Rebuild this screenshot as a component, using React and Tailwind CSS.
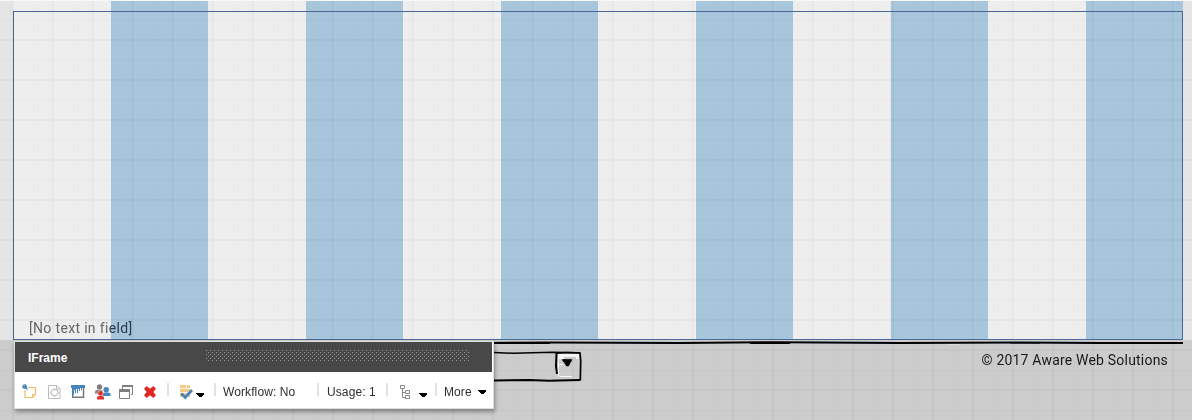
import React from "react";

function Caret({ className = "" }) {
  return (
    <svg width="8" height="5" viewBox="0 0 8 5" className={className} shapeRendering="crispEdges">
      <path d="M0 0h8v1L5 4H3L0 1z" fill="#000" />
    </svg>
  );
}

function Separator({ className = "" }) {
  return <span className={"block h-[13px] w-[2px] shrink-0 bg-[#e2e2e6] " + className} />;
}

function NoteIcon() {
  return (
    <svg width="16" height="16" viewBox="0 0 16 16" fill="none">
      <path d="M5.500 3.500h8v7l-3 3h-7.500V6" stroke="#efbb66" strokeWidth="1.200" />
      <path d="M13.500 10.500h-3v3" stroke="#efbb66" />
      <circle cx="2.600" cy="2.600" r="2.400" fill="#4684bd" />
      <path d="M3 3l2.500 2.500" stroke="#4684bd" strokeWidth="1.300" />
      <path d="M1.500 1.500h1" stroke="#bcd5ec" />
    </svg>
  );
}

function FileCodeIcon() {
  return (
    <svg width="14" height="16" viewBox="0 0 14 16" fill="none" stroke="#bcbcbc">
      <path d="M.500 1.500H9l3 3v10H.500z" />
      <path d="M8.500 1.500v3.500H12" />
      <path d="M4.500 6L2.500 8.500l2 2.500M8.500 6l2 2.500-2 2.500M4.500 6l2-1 2 1M4.500 11l2 1 2-1" strokeWidth="1.200" />
    </svg>
  );
}

function PaintIcon() {
  return (
    <svg width="14" height="15" viewBox="0 0 14 15">
      <path d="M1.700 4v9.300h10.800V4" fill="none" stroke="#777" strokeWidth="1.500" />
      <path d="M0 1h14v3h-3v2h-1V4H9v3H8V5H7v4H6V5H5v4H4V6H3v5H1V4H0z" fill="#4684bd" />
    </svg>
  );
}

function PeopleIcon() {
  return (
    <svg width="16" height="16" viewBox="0 0 16 16">
      <circle cx="4.500" cy="3" r="2.700" fill="#808080" />
      <path d="M0 9.500V8q0-2 2-2h4q1 0 2 1v2.500z" fill="#808080" />
      <circle cx="11.200" cy="5.700" r="2.700" fill="#4684bd" />
      <path d="M7.500 12v-1.500q0-2 2-2H13q2.500 0 2.500 2V12z" fill="#4684bd" />
      <circle cx="5.500" cy="9.200" r="2.700" fill="#e3302b" stroke="#fff" strokeWidth=".5" />
      <path d="M2 15.500V14q0-2 2-2h3q2 0 2 2v1.500z" fill="#e3302b" />
    </svg>
  );
}

function WindowsIcon() {
  return (
    <svg width="14" height="14" viewBox="0 0 14 14" fill="none" stroke="#808080">
      <path d="M3.500 4V1M13.500 1v8.500H12" />
      <path d="M3 1h11" strokeWidth="2" />
      <path d="M.500 5.500h10v8H.500z" fill="#fff" />
      <path d="M0 5.500h11" strokeWidth="3" />
    </svg>
  );
}

function DeleteIcon() {
  return (
    <svg width="12" height="12" viewBox="0 0 12 12">
      <path d="M2.800 0L6 2.800 9.200 0 12 2.800 9.300 6l2.700 3.200L9.200 12 6 9.300l-3.200 2.700L0 9.200 2.700 6 0 2.800z" fill="#dd2923" />
    </svg>
  );
}

function ValidateIcon() {
  return (
    <svg width="13" height="16" viewBox="0 0 13 16" fill="none">
      <path d="M0 1h10v12H0z" fill="#f3ca86" />
      <path d="M0 4.500h10M0 8.500h10M6.500 1v4" stroke="#fff8e8" />
      <path d="M1.200 9.500l4 4L12 6" stroke="#4684bd" strokeWidth="2.700" />
    </svg>
  );
}

function TreeIcon() {
  return (
    <svg width="11" height="14" viewBox="0 0 11 14" fill="none" stroke="#888">
      <path d="M.500.500h4v3h-4zM5.500 5.500h4v3h-4zM5.500 10.500h4v3h-4zM2.500 4v8.500h3M2.500 7.500h3" />
    </svg>
  );
}

/* Squared-paper lines: 40px cells with a fainter half-cell rule. */
function PaperLines({ id, y, dashed }) {
  return (
    <svg className="pointer-events-none absolute inset-0 h-full w-full" aria-hidden="true">
      <defs>
        <pattern id={id} width="40" height="40" x="12" y={y} patternUnits="userSpaceOnUse">
          <path d="M0 0h2v40H0zM0 0h40v2H0z" fill="#000" fillOpacity=".03" />
          <path d="M0 21h40v1H0z" fill="#000" fillOpacity=".022" />
          {dashed ? (
            <path d="M21 5h1v9h-1zM25 5h1v9h-1zM21 25h1v9h-1zM25 25h1v9h-1zM38 0h1v40h-1z" fill="#000" fillOpacity=".02" />
          ) : (
            <path d="M21 0h1v40h-1zM25 0h1v40h-1z" fill="#000" fillOpacity=".02" />
          )}
        </pattern>
      </defs>
      <rect width="100%" height="100%" fill={"url(#" + id + ")"} />
    </svg>
  );
}

function ContentArea() {
  return (
    <section className="relative h-[340px] bg-[#e5e5e5] pl-[13px] pr-[9px]">
      <div className="relative flex h-full flex-col justify-end bg-[#eee]">
        <p className="pb-[3px] pl-[16px] font-['Roboto',sans-serif] text-[14px] leading-[18px] tracking-[0.33px] text-[#666]">
          [No text in fi<span className="text-[#3b4650]">eld]</span>
        </p>
        <div className="absolute inset-x-0 bottom-0 top-px grid grid-cols-12 mix-blend-multiply">
          {Array.from({ length: 12 }, (_, i) => (
            <span key={i} className="even:bg-[#b3d4ec]" />
          ))}
        </div>
        <div className="absolute inset-x-0 bottom-0 top-[11px] border border-[#4a6996]" />
      </div>
      <PaperLines id="upper" y="39" dashed />
      <div className="absolute inset-x-0 top-0 h-px bg-[#f8f8f8]" />
    </section>
  );
}

function SketchLines() {
  return (
    <svg className="absolute left-[480px] top-0 h-[50px] w-[703px]" viewBox="0 0 703 50" fill="none" stroke="#000">
      <path d="M0 3L70 2.500 200 3 300 2.200 420 3 540 2.500 620 3 703 3" strokeWidth="2" />
      <path d="M10 3.500h60M120 2.500h80M270 3.500h40M530 3h30" strokeWidth="1" />
      <path d="M468 4.500h12" stroke="#ddd" />
      <path d="M14 12.500l20 .8 18-.5 20-.5 28 .5" strokeWidth="1.500" />
      <path d="M14 40.500l35-.5 20 .7 31-.7" strokeWidth="2" />
      <path d="M78 14h21v5h-3v-2H84v2h-5v18h-1zM79 24h4v1h-4zM80 36h12v1H80z" fill="#f6f6f6" stroke="none" />
      <path d="M76.500 13l-.500 13 1 8" strokeWidth="2" />
      <path d="M76 13.200l12-.7 12 .5.700 8-.4 19.500" strokeWidth="1.700" />
      <path d="M82.500 19.500h9q.5 1.500-1 2.500l-2 4h-2l-2-3.500q-2-1-2-3z" fill="#000" strokeWidth=".7" />
    </svg>
  );
}

function Footer() {
  return (
    <footer className="relative flex h-[80px] items-start justify-end bg-[#ccc] pr-[24px] pt-[10px]">
      <PaperLines id="lower" y="9" />
      <SketchLines />
      <p className="relative whitespace-nowrap font-['Roboto',sans-serif] text-[14px] leading-[20px] tracking-[0.2px] text-[#181818]">
        © 2017 Aware Web Solutions
      </p>
    </footer>
  );
}

function FieldToolbar() {
  return (
    <div className="absolute left-[14px] top-[341px] h-[68px] w-[480px] border border-[#dedede] bg-white font-['Liberation_Sans',Arial,sans-serif] text-[12px] text-[#2e2e2e] shadow-[1px_3px_4px_rgba(0,0,0,0.35)]">
      <div className="mr-px flex h-[30px] items-center bg-[#484848] pl-[13px] pr-[23px]">
        <b className="w-[178px] pt-px text-white">IFrame</b>
        <svg className="mb-[3px] h-[12px] w-[264px]" shapeRendering="crispEdges">
          <defs>
            <pattern id="grip" width="4" height="4" patternUnits="userSpaceOnUse">
              <path d="M0 0h1v1H0zM2 2h1v1H2z" fill="#999" />
            </pattern>
          </defs>
          <rect width="264" height="12" fill="url(#grip)" />
        </svg>
      </div>
      <div className="flex h-[35px] items-center pl-[7px] pt-[4px]">
        <div className="flex w-[26px]"><NoteIcon /></div>
        <div className="flex w-[23px]"><FileCodeIcon /></div>
        <div className="flex w-[24px]"><PaintIcon /></div>
        <div className="flex w-[24px]"><PeopleIcon /></div>
        <div className="flex w-[25px]"><WindowsIcon /></div>
        <div className="flex w-[23px]"><DeleteIcon /></div>
        <Separator className="mb-[4px]" />
        <div className="ml-[11px] flex w-[34px] items-center">
          <ValidateIcon />
          <Caret className="ml-[3px] mt-[7px]" />
        </div>
        <div className="flex w-[9px]"><Separator className="mb-[4px]" /></div>
        <span className="w-[94px] whitespace-nowrap tracking-[0.1px]">Workflow: No</span>
        <div className="flex w-[10px]"><Separator className="mb-[4px]" /></div>
        <span className="w-[59px] whitespace-nowrap tracking-[0.1px]">Usage: 1</span>
        <Separator className="mb-[4px]" />
        <div className="ml-[12px] flex w-[35px] items-center">
          <TreeIcon />
          <Caret className="ml-[8px] mt-[7px]" />
        </div>
        <div className="flex w-[9px]"><Separator className="mb-[4px]" /></div>
        <span className="tracking-[0.1px]">More</span>
        <Caret className="ml-[6px] mt-px" />
      </div>
    </div>
  );
}

export default function App() {
  return (
    <main className="relative h-[420px] w-[1192px] overflow-hidden">
      <ContentArea />
      <Footer />
      <FieldToolbar />
    </main>
  );
}
